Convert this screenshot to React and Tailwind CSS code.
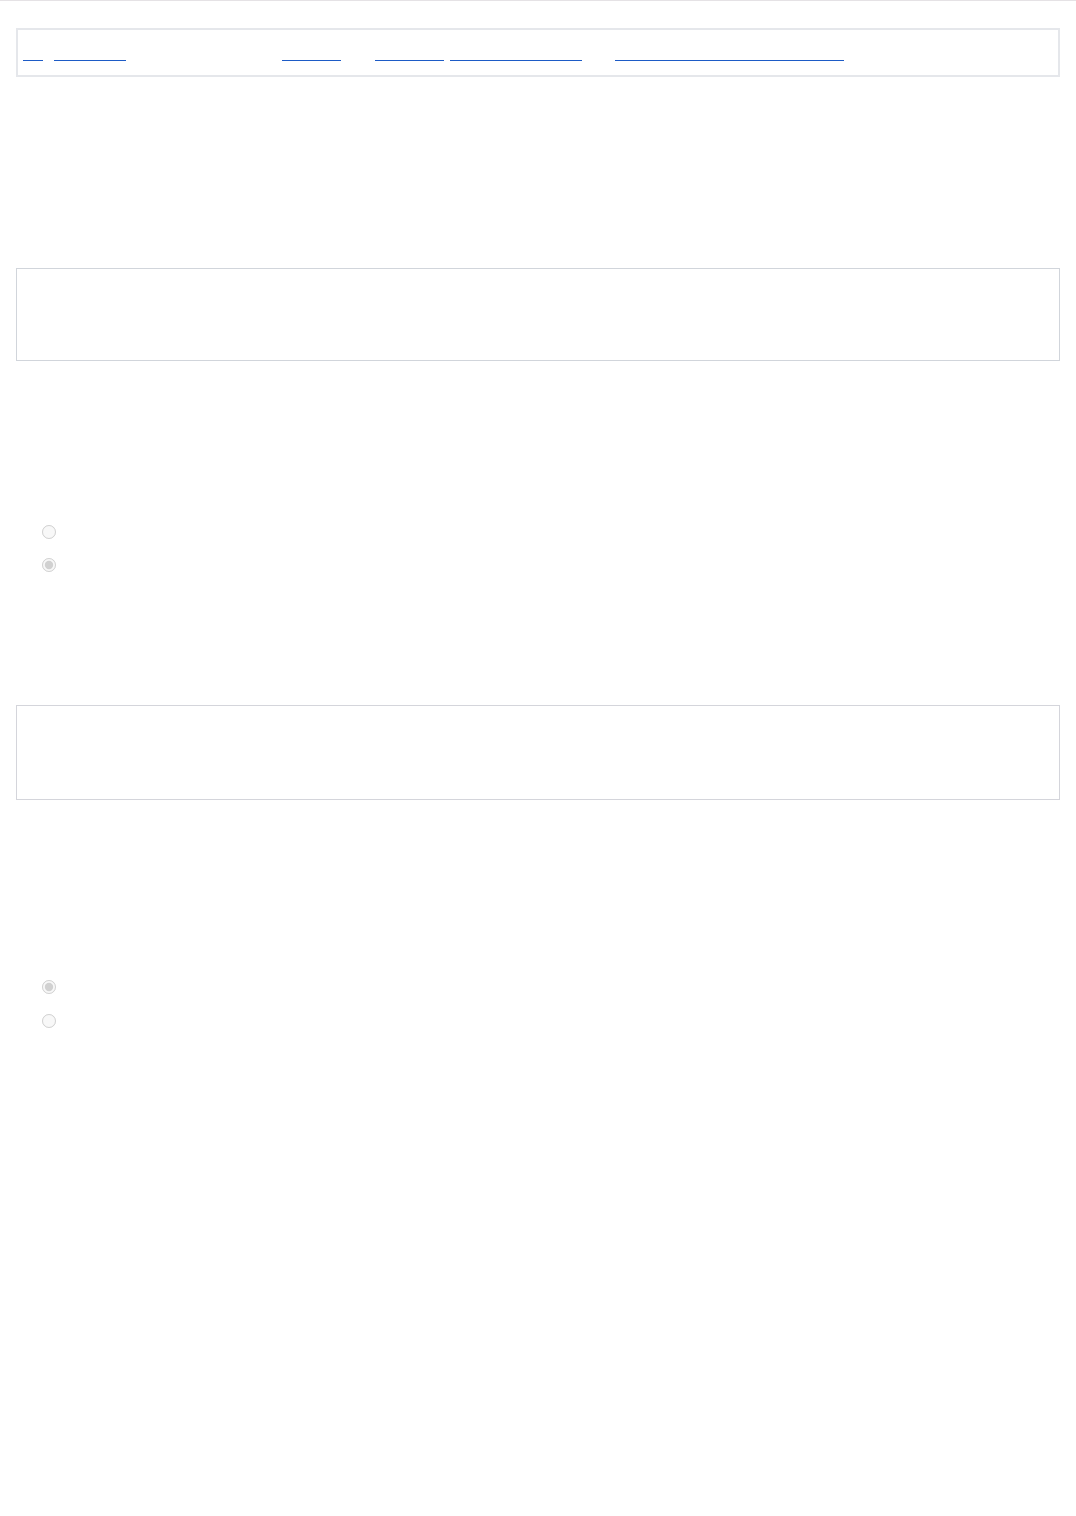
import React from "react";

// Links in the top bar: left gap (px) before each, underline width (px)
const navLinks = [
  { label: "Top", gap: 5, w: 20 },
  { label: "Products", gap: 11, w: 72 },
  { label: "About", gap: 156, w: 59 },
  { label: "Contact", gap: 34, w: 69 },
  { label: "Support center", gap: 6, w: 132 },
  { label: "Terms and privacy policy", gap: 33, w: 229 },
];

function RadioGroup({ name, options, checked, gap }) {
  return (
    <div className={`flex flex-col pl-[26px] ${gap}`}>
      {options.map((opt) => (
        <label key={opt} className="flex items-center gap-2 h-[13px]">
          <input
            type="radio"
            name={name}
            disabled
            defaultChecked={opt === checked}
            className="w-[14px] h-[14px] m-0"
          />
          <span className="text-sm text-white">{opt}</span>
        </label>
      ))}
    </div>
  );
}

export default function App() {
  return (
    <div
      className="min-h-[1516px] bg-white border-t border-[#e5e2e5]"
      style={{ fontFamily: '"Liberation Sans", Arial, sans-serif' }}
    >
      <div className="px-4">
        {/* Top link bar */}
        <nav className="mt-[27px] h-[49px] border-2 border-[#e5e7eb] flex items-start pt-[14px]">
          {navLinks.map((link) => (
            <a
              key={link.label}
              href="#"
              className="block h-[17px] border-b border-[#1d5bc6] text-white text-[11px] leading-4 whitespace-nowrap"
              style={{ marginLeft: link.gap, width: link.w }}
            >
              {link.label}
            </a>
          ))}
        </nav>

        {/* First panel */}
        <div className="mt-[191px] h-[93px] border border-[#d1d5db]" />

        <div className="mt-[164px]">
          <RadioGroup
            name="first"
            options={["Option A", "Option B"]}
            checked="Option B"
            gap="gap-[20px]"
          />
        </div>

        {/* Second panel */}
        <div className="mt-[134px] h-[95px] border border-[#d4d5db]" />

        <div className="mt-[180px]">
          <RadioGroup
            name="second"
            options={["Option A", "Option B"]}
            checked="Option A"
            gap="gap-[21px]"
          />
        </div>
      </div>
    </div>
  );
}
